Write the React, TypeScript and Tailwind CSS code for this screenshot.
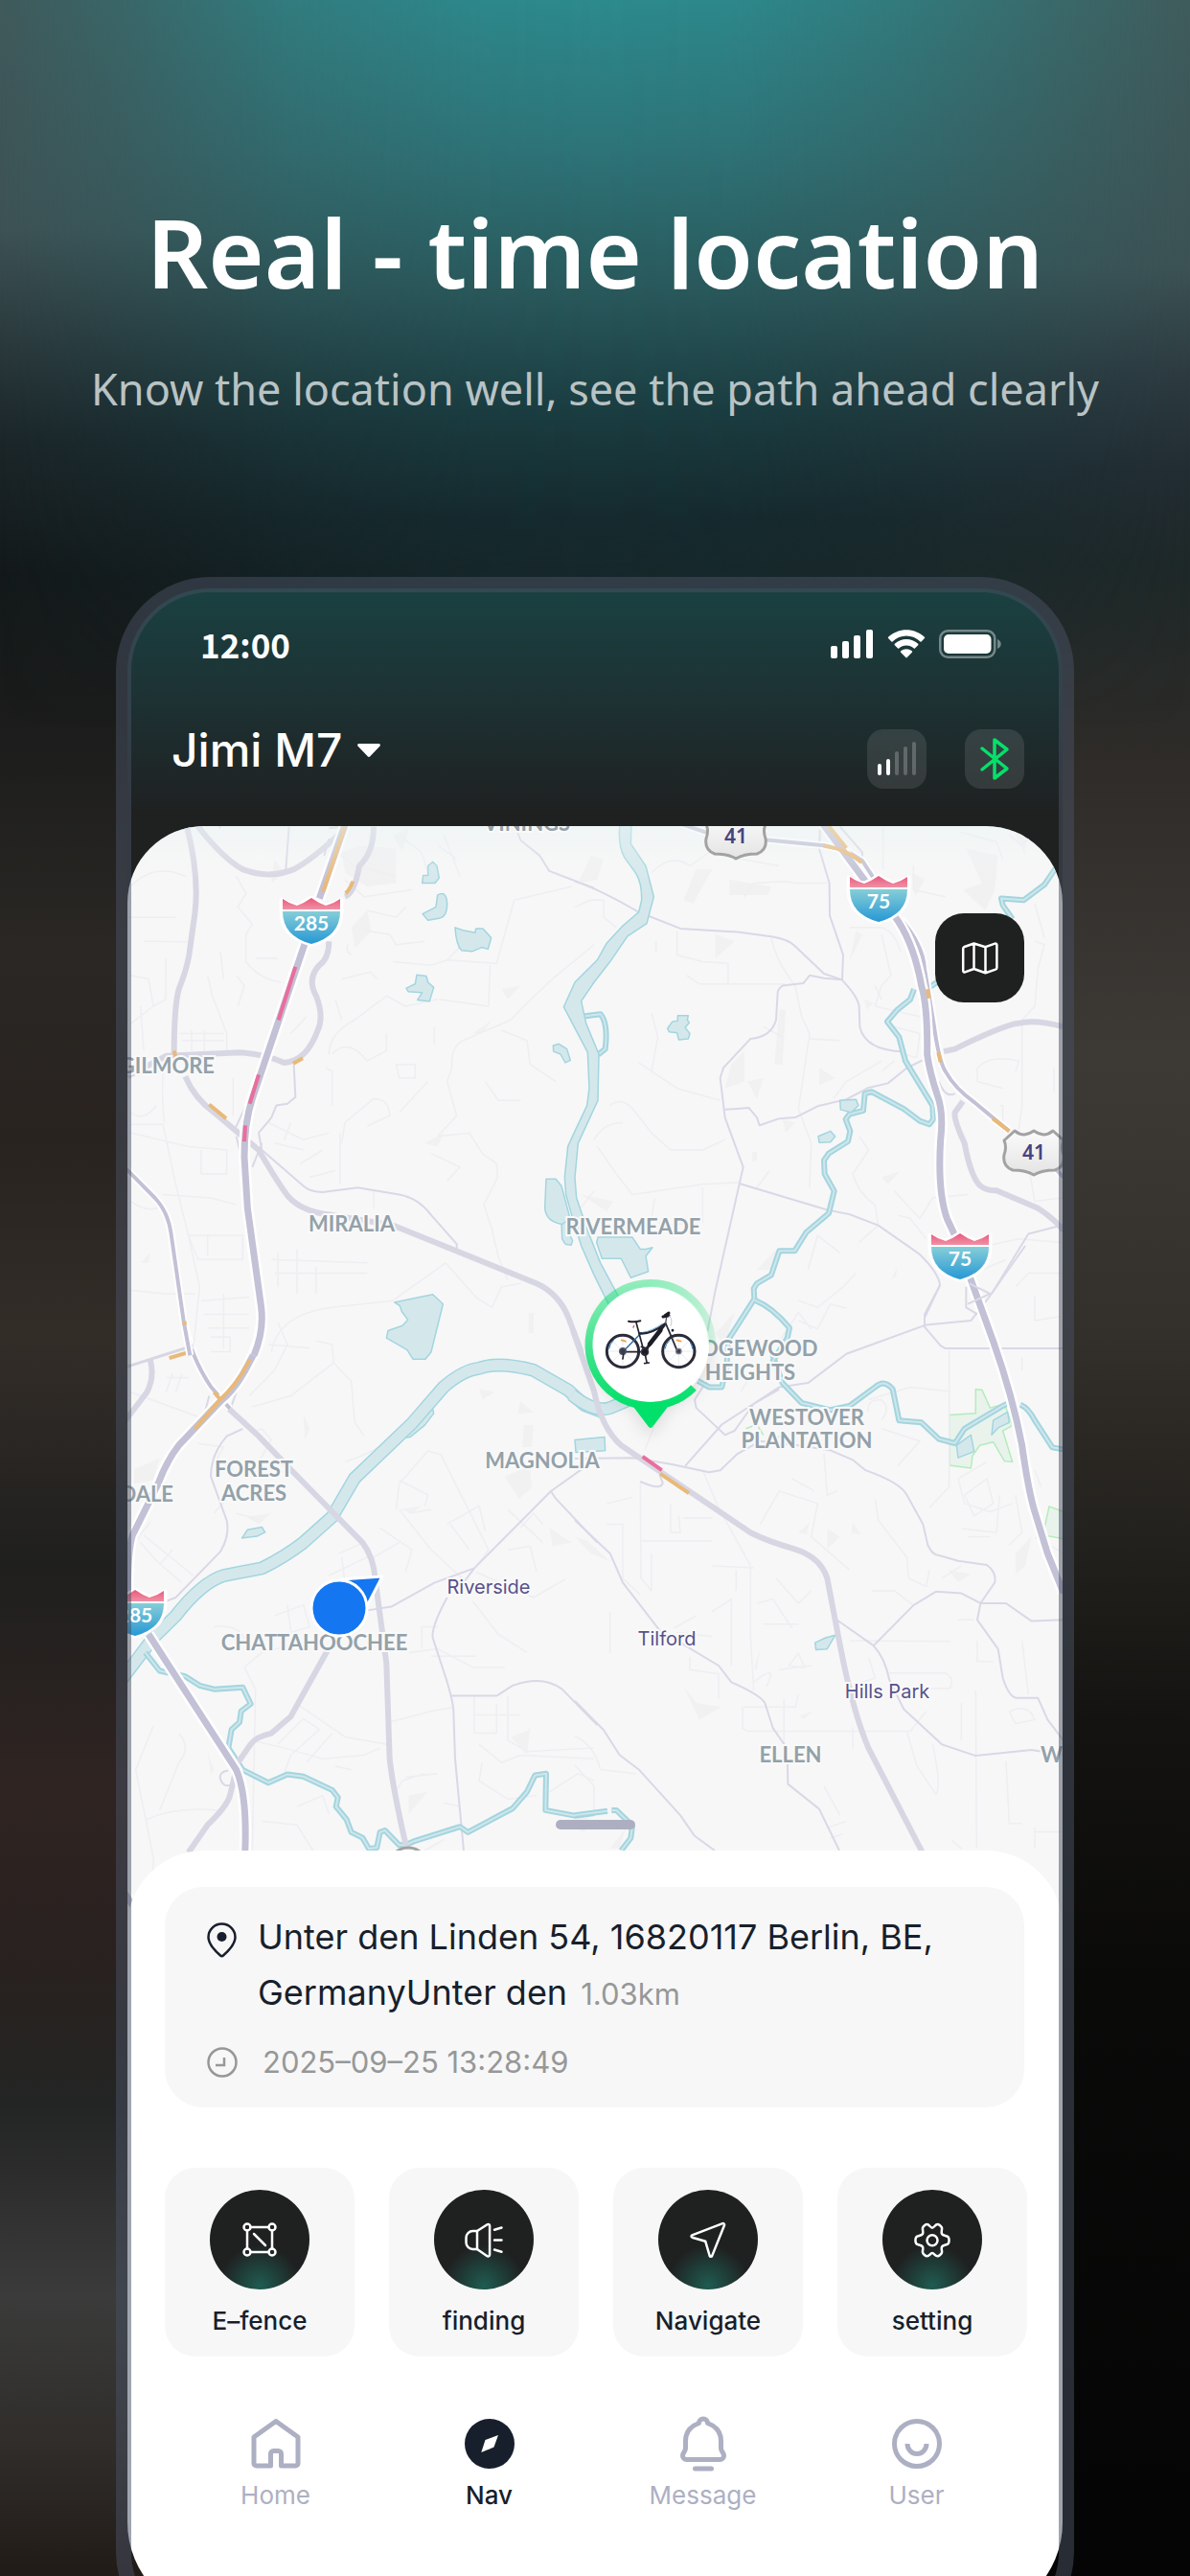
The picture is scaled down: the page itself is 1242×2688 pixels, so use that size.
import type { ReactNode } from "react";

type Tone = "minor" | "street" | "arterial" | "rail" | "highway" | "trunk" | "slow" | "jam";

const toneClass: Record<Tone, string> = {
  minor: "stroke-[#eeeef3] stroke-[1.5px]",
  street: "stroke-[#dad8e7] stroke-[2px]",
  arterial: "stroke-[#d7d6e3] stroke-[6px]",
  rail: "stroke-[#d7d6e3] stroke-[3px]",
  highway: "stroke-[#c2c1d6] stroke-[7px]",
  trunk: "stroke-[#c2c1d6] stroke-[4px]",
  slow: "stroke-[#e9b977] stroke-[4px]",
  jam: "stroke-[#ea6e9c] stroke-[4px]",
};

function Line({ d, tone }: { d: string; tone: Tone }) {
  const casing =
    tone === "highway"
      ? "stroke-white stroke-[12px]"
      : tone === "trunk"
        ? "stroke-white stroke-[8px]"
        : "";
  return (
    <g fill="none" strokeLinejoin="round">
      {casing && <path d={d} className={casing} vectorEffect="non-scaling-stroke" />}
      <path d={d} className={toneClass[tone]} vectorEffect="non-scaling-stroke" />
    </g>
  );
}

function Creek({ d, wide = false }: { d: string; wide?: boolean }) {
  return (
    <g fill="none" strokeLinejoin="round">
      <path
        d={d}
        className={wide ? "stroke-[#a3d5df] stroke-[14px]" : "stroke-[#a3d5df] stroke-[6px]"}
        vectorEffect="non-scaling-stroke"
      />
      <path
        d={d}
        className={wide ? "stroke-[#d4e8ec] stroke-[11px]" : "stroke-[#cfe6eb] stroke-[2px]"}
        vectorEffect="non-scaling-stroke"
      />
    </g>
  );
}

function Lake({ d }: { d: string }) {
  return (
    <path
      d={d}
      className="fill-[#d4e8ec] stroke-[#a3d5df] stroke-[1.5px]"
      strokeLinejoin="round"
      vectorEffect="non-scaling-stroke"
    />
  );
}

function NorthWest() {
  return (
    <g transform="translate(130 850) scale(0.33333 0.35714)">
      <g className="fill-[#f1f1f2]">
        <path d="M680 110l60-20 110 10v100l-90 10-70-40z" />
        <path d="M710 330l50-50 12 60-50 50zM840 60l50-20-20 70zM1180 510l60-10-40 40zM940 960l60-30-20 40zM1090 640l60-40-30 40z" />
        <path d="M50 1310l30-30-5 30zM1265 1455h16v60h-16zM470 130l30 40-40 30z" />
      </g>
      <Line
        tone="minor"
        d="M20 210Q90 140 190 180M10 300H160M60 370L200 372M130 420L128 540 90 560 20 610M20 470L75 480 90 560M260 470L275 530 320 640V690M300 400L310 480M355 560L375 500 350 470M350 180L380 230 355 270 400 320 380 350V430Q420 480 490 490M410 420H480M640 90L720 150 850 180M690 190L750 240 900 220M760 280L850 300 880 270M860 60L930 110 960 200M1000 60L1050 180M980 90L1040 130"
      />
      <Line
        tone="minor"
        d="M840 430L960 440 1010 425 1165 435 1220 250 1400 210M1010 425L1110 330M985 540L1140 560 1145 440M1470 380L1340 480 1250 560 1210 600 1060 660Q1020 680 1025 740L1010 780 1040 880 980 940M640 700Q640 640 720 600L820 530 880 560 980 540M650 700Q700 650 760 720L820 690V640M970 670V620M850 730H910V770H860zM1180 630L1260 660 1270 730 1350 780M1130 780L1170 835H1240M650 850V750L630 740M680 960L690 900 780 830Q830 830 830 880L760 910M860 870L950 780M675 930V1080M980 940L1080 930 1120 990 1165 1020 1168 1060 1125 1140 1150 1210 1170 1290 1200 1360M960 990L1050 1030 1010 1070"
      />
      <Line
        tone="minor"
        d="M450 900L560 950 640 930M470 960L560 980M500 950L520 900M550 1020L620 980M580 1060L660 1040M20 905H120L160 1080 200 1230 235 1380 215 1560M20 930L200 970 320 980V1050H240V980M20 1130Q80 1170 120 1140M120 1110L270 1120 350 1140M200 1230H370V1300H230zM260 1230V1290M20 1390L130 1400 220 1400M240 1420L390 1410M250 1460H390M260 1500H390M310 1400V1560M480 1280V1380M460 1300L760 1310M470 1340H760M540 1270V1400M600 1320V1400M460 1570Q480 1460 650 1440L840 1420 1005 1310 1100 1410 1150 1440 1180 1380 1240 1370M780 1100V1150"
      />
      <Line tone="minor" d="M130 705Q110 780 125 900M60 690L50 560M170 640H310M180 660H310M210 630V690M250 630V690M340 770V880M20 870Q60 900 100 850M570 590L520 640M660 540L680 600M680 480L770 460 790 480M700 380Q690 400 710 410M760 340L830 350 850 380 940 370" />
      <Line tone="street" d="M515 35L505 160M295 35l6 4M640 40L690 35M625 120L640 70M1230 50L1240 75 1300 120 1330 165 1470 215" />
      <Line tone="street" d="M530 730L535 825 510 845 475 850 460 885 420 930 430 980 560 1085Q580 1103 620 1103L730 1090 860 1110Q920 1120 960 1170L1040 1255V1270M345 920L380 850M350 940L365 1000M400 1030L430 960" />
      <Lake d="M950 150L965 138 978 150 985 185 972 200H932L935 178H950z" />
      <Lake d="M980 235Q1008 220 1010 260 1010 300 985 303L950 309 933 290 975 270z" />
      <Lake d="M1035 330L1060 338 1098 345 1100 333H1122L1148 360 1138 393 1118 388 1088 400 1055 397Q1038 380 1035 330z" />
      <Lake d="M915 468L945 472 950 490 968 505 955 545 917 542 932 520 888 517 882 507 910 495z" />
      <Lake d="M1342 675L1360 670 1385 685 1396 718 1380 725 1365 700 1343 692z" />
      <Lake d="M845 1425L935 1408 965 1402 997 1430 960 1570 942 1591H903L885 1564 820 1529 825 1508 870 1493 887 1476 868 1452 862 1435z" />
      <Lake d="M1368 1190L1370 1240 1380 1255 1398 1258 1403 1245 1390 1220V1180z" />
      <Lake d="M1320 1065H1350L1368 1085 1395 1180 1370 1197Q1320 1190 1316 1150z" />
      <Line tone="arterial" d="M195 35Q235 180 220 290L205 390Q200 440 170 510 155 560 155 700" />
      <Line tone="arterial" d="M230 35Q310 130 370 160 450 190 530 160 590 130 680 50" />
      <Line tone="arterial" d="M780 35Q780 110 735 150 720 230 690 240M640 370Q640 420 610 440 570 480 600 530 625 590 605 630 570 720 500 725 440 700 360 695L130 705 10 765" />
      <Line tone="arterial" d="M190 765Q220 830 280 870L420 980Q470 1060 500 1100 540 1160 650 1170L840 1200 1290 1370Q1360 1400 1390 1470L1430 1570" />
      <Line tone="highway" d="M690 30L610 245M565 375L400 830Q375 900 375 1000L385 1150 428 1440Q437 1510 405 1580" />
      <Line tone="trunk" d="M5 1035L95 1120Q135 1160 145 1220L185 1480 205 1580" />
      <Line tone="slow" d="M690 35L622 225M715 195Q705 220 692 230M528 727L558 712M265 847L318 888M155 690L160 708M188 1480V1492" />
      <Line tone="jam" d="M535 445L482 600M420 760L392 845M378 908L375 955" />
    </g>
  );
}

function NorthEast() {
  return (
    <g transform="translate(600 850) scale(0.33333 0.35714)">
      <g className="fill-[#f1f1f2]">
        <path d="M50 120l40 10-20 60-60 10zM380 160h50l-60 100-30-10zM485 190l130 20-10 25H485zM1225 100l100 20-10 100-30 60-70-60 60-20zM440 350l60 20-60 50zM880 340l20 10-40 80z" />
        <path d="M640 570h20l-10 160h-25zM490 730l40-40v90l-60 20zM540 780l50-10-20 60zM765 740l50 30-50 20zM905 540l30 10-20 20zM20 1110l100 20-20 30zM555 985h14v28h-14zM1055 170l40 20-30 50z" />
        <path d="M570 1330l60-60-10 60zM960 1060l60-20-40 40zM1380 60l30-20v80zM250 370h8v34h-8zM650 890l40 10-30 30z" />
      </g>
      <Line
        tone="minor"
        d="M0 270L50 250H90V300L130 330M240 170Q300 110 360 150L420 110 520 130 640 150M530 240L560 200 660 195 690 200H790M320 340V410L400 430 480 435V495M350 470L390 495H660M615 360Q630 430 690 500L710 590 735 640 700 860 740 960 735 1090M735 655L830 660M590 620L650 650M240 580L260 650 240 750M200 725L320 800 455 835M110 850Q150 820 190 870L240 930 300 980 400 980 470 950M60 950Q90 900 150 900M70 970L130 1050 180 1110 400 1080 515 1075M250 1120L240 1180 280 1200 400 1190V1090M610 1040L570 1090M0 1170L60 1100"
      />
      <Line
        tone="minor"
        d="M860 330H960Q1000 340 1020 400M960 350L990 470 960 500 940 560 1080 590M960 540L940 500M890 940L920 980 870 1050Q890 1110 940 1140L950 1200 890 1250M1000 1100L1080 1180 1120 1120 1230 1110M1010 1170L1050 1180 1100 1240M1000 620L1080 640 1070 710 1030 700M960 750L1000 720M810 830L850 780 960 720M1060 150V220L1160 240M965 35V160M1205 50L1320 80 1340 130M1440 370L1470 380 1450 450 1440 560 1400 600V850M1260 740Q1300 700 1390 720L1380 750M1260 740V780L1340 800M1330 850H1340V930M1400 850L1390 920M1410 970L1440 1130 1525 1120M1240 1270L1390 1240 1525 1250M1250 1340L1350 1300M700 1420L760 1440 840 1380 880 1340M1525 1340L1420 1340 1380 1380M730 1330L760 1230 830 1280M1440 260L1470 360M1500 740V810M1360 60L1400 90 1430 60 1525 90"
      />
      <Line tone="street" d="M0 195Q70 215 200 285L330 333 510 343 620 357Q670 365 690 385L780 465 835 482Q885 530 890 560L892 620Q910 690 1030 692" />
      <Line tone="street" d="M768 35L765 100 797 200 798 295 840 410 837 482 780 478 735 470 715 493 650 500Q635 510 635 520L630 600Q615 650 550 655L465 740 455 770 470 885 527 1030 440 1390 415 1510" />
      <Line tone="street" d="M470 862L545 857 570 885 578 908 640 888 690 885 760 852 850 832 920 798 980 785 1040 740 1090 717M515 1078L790 1155 860 1168 950 1200 1080 1285Q1140 1340 1143 1375L1095 1470M1305 1400L1420 1225 1525 1200" />
      <Line tone="street" d="M830 35L900 110V130M1140 780Q1160 830 1190 815M1225 1380V1440L1260 1460M1235 1370L1300 1400 1230 1430" />
      <Creek d="M20 590L80 583Q105 610 95 685L72 702" />
      <Lake d="M140 35Q135 90 155 125L190 170Q210 200 209 250L200 285 150 325 100 375 70 425 0 490-35 562 40 695 45 800 38 850 0 925-22 970-32 1060-28 1110-10 1170 20 1260 60 1345 105 1430H150L135 1405 80 1310 40 1215 5 1120 0 1060 10 960 40 900 72 835 75 700 35 610 20 545 60 490 110 430 165 355 225 318 247 240 222 150 175 85 177 20H140z" />
      <Creek d="M1510 150L1470 205 1405 250 1335 245 1340 265 1370 305M1150 480L1110 505M1062 510L1050 540 1010 570 978 605 1015 650 1035 720 1120 850 1122 890 1110 905 1080 895 1030 860 930 810 908 815 903 865 860 875 848 890 862 925 855 955 795 990 780 1010 782 1050 812 1100 795 1165 725 1220 688 1275H640L615 1345 570 1370 560 1385 562 1415 480 1535" />
      <Creek d="M562 1418Q620 1440 672 1500L665 1530 618 1600" />
      <Lake d="M830 835L880 832 888 850 865 870 832 862z" />
      <Lake d="M762 940L800 925 815 940 800 957 765 958z" />
      <Lake d="M322 587H355L352 600 358 608 345 622 360 640 355 655 325 658 320 638 295 635 290 625 305 605 322 603z" />
      <Lake d="M72 1235H180L205 1270H222L243 1265 222 1290 230 1335 175 1353 145 1297H85L68 1250z" />
      <Line tone="arterial" d="M1155 692L1190 685Q1350 610 1400 608 1450 600 1530 620" />
      <Line tone="arterial" d="M1215 838L1190 870Q1185 890 1220 960 1240 1060 1270 1085 1290 1100 1320 1098L1450 1150Q1500 1180 1530 1215" />
      <Line tone="trunk" d="M340 30L420 55M580 72L780 90 850 105 900 135 935 185" />
      <Line tone="trunk" d="M1020 305Q1090 380 1095 450L1125 620Q1140 720 1160 750 1190 800 1250 840L1360 925M1500 1030L1530 1060" />
      <Line tone="highway" d="M775 25L910 195M1000 295Q1060 370 1085 500 1105 560 1103 700 1110 750 1135 820 1155 870 1145 950 1135 1100 1165 1180L1200 1250" />
      <Line tone="slow" d="M792 30L850 98M778 91Q850 100 898 140M1104 510L1109 537M1138 695L1145 723M1308 888L1360 925" />
    </g>
  );
}

function SouthWest() {
  return (
    <g transform="translate(130 1380) scale(0.33333 0.38265)">
      <g className="fill-[#f1f1f2]">
        <path d="M30 400l80-30-20 60-60 10zM560 250l20 40-15 30zM1240 215l40 30-50 5zM1250 280h30l-5 60h-30zM1190 420l80-30 5 60-40 30zM1330 560l70 40-60 10zM860 510l70-10-30 20zM380 530l80-10-40 30z" />
        <path d="M890 1290l60-10-60 60zM1240 1160l30-60-10 80zM1390 1370l70-40-20 60zM260 1170l20 50-10 10zM1110 180l50 10-40 20zM1210 1130l60-20-20 60z" />
      </g>
      <Line
        tone="minor"
        d="M270 40H330V80H270M450 60L580 70M480 0L510 60 470 130 390 200M600 50L650 60 655 110 520 200 400 230M655 110L710 160 720 270 750 310M130 150H200M20 190L240 260M150 140L130 190M180 140L160 190M230 330L310 340 290 370 340 400M400 300L430 290 460 320 420 380M40 590L80 545M50 600L100 650 180 710M60 580L215 690M110 660L150 620M280 520L310 490M350 520L430 540M690 380Q800 350 870 290"
      />
      <Line
        tone="minor"
        d="M850 510L860 440 950 350 990 360 1140 620 1070 700M860 430L950 470 940 500M860 510L960 620 1060 700M890 520L960 510M1010 550L1110 500 1130 570M1020 550L1080 620M800 560L900 620 880 680M780 640L860 600M670 630L750 600M680 640L690 710M640 690L760 640M470 800L560 770 580 830 500 850M280 830Q360 820 380 870M510 770L520 840M1200 510L1310 600M1240 560L1280 520 1310 550M1200 620L1270 610 1290 680M930 830H980M890 900L980 890 1090 940H1190M1100 680L1280 750 1380 700M1090 760L1170 850 1260 900M960 910H1100M930 830V890"
      />
      <Line
        tone="minor"
        d="M375 940L410 1000 400 1440M375 940L430 900 520 880M540 1040L690 1130 820 1150M480 1150L560 1080 610 1110 520 1180 500 1230M570 1200L650 1120M400 1140L500 1160 620 1190 750 1180 800 1160M660 1210L710 1220M830 1090L960 1060 1030 1050M1095 1020V1120H1165V1040M1095 1070H1240M1200 1020V1140L1260 1170 1470 1160M1110 1150L1180 1200 1240 1180 1470 1190M1120 1200L1110 1250 1200 1300 1290 1290M1330 1280L1420 1230 1470 1250M90 1100L35 1220 70 1370 90 1460V1500M70 1355Q160 1320 290 1330M170 1120Q210 1160 170 1200L110 1330M430 1360L540 1370 590 1440M540 1320L620 1290 640 1340M840 1290L870 1250 940 1230M880 1240L980 1230M1000 1310L1050 1320M940 1440L1000 1410"
      />
      <Line tone="street" d="M370 290L320 310Q270 360 270 420L320 540Q330 580 300 625L160 750 130 760M760 785L835 775 970 710 1095 670 1335 460 1440 395M1065 705L1095 670M1010 750Q960 830 965 860L1010 980Q1030 1040 1030 1060L1035 1190 1062 1440M1020 1018H1165L1215 990Q1310 960 1370 1000L1480 1098M1335 460L1350 480 1480 600" />
      <Line tone="street" d="M325 1222Q295 1225 300 1245 310 1270 335 1260M350 190L330 240M265 200L250 250" />
      <Lake d="M368 588L385 565 430 558 440 572 415 583z" />
      <Lake d="M870 315L965 235 968 248 940 280 895 312z" />
      <Creek wide d="M-10 975L90 860 160 800Q240 710 310 690L430 670Q500 640 560 600L650 530 720 425 900 275 1000 175Q1060 130 1110 125 1170 105 1280 130L1390 185 1440 225 1500 245" />
      <Creek d="M65 900L110 950 190 965 235 990 280 1000 370 995 395 1040 365 1060 360 1090 335 1110 325 1160 370 1220 450 1255 510 1232 560 1238 650 1275 668 1295 662 1320 695 1355 710 1390 745 1405 765 1435 790 1432 800 1390 815 1385 860 1425H880L905 1415 1050 1375 1075 1390 1215 1325 1260 1280 1285 1235 1320 1230 1318 1330 1410 1345 1470 1338" />
      <Line tone="rail" d="M10 120L190 70" />
      <Line tone="arterial" d="M80 100Q95 150 70 190L0 270M320 230L420 310 525 405 745 600Q780 640 785 700L820 930 830 1190Q840 1270 882 1430M635 895L520 1075 460 1120Q410 1130 395 1150L355 1200 330 1290Q320 1320 260 1370L200 1445" />
      <Line tone="trunk" d="M187-5Q205 90 270 175L330 235" />
      <Line tone="highway" d="M430-10Q425 60 390 110 350 180 300 215L170 335Q130 380 105 440L25 580Q10 620 10 740M75 850L350 1220Q385 1290 377 1450M0 1555L25 1590" />
      <Line tone="slow" d="M392 100Q360 160 300 210L220 290M280 190L300 210M140 97L193 83" />
    </g>
  );
}

function SouthEast() {
  return (
    <g transform="translate(600 1300) scale(0.33333 0.43367)">
      <g className="fill-[#f1f1f2]">
        <path d="M0 700l40 10 70 50-60-20zM340 1060l40 40 80 10-70 30zM790 680l40 20-40 30zM870 665l25 30-30-5zM735 665l-10 30-25-5zM1380 740l50-40-20 70-30 20zM1170 780l70 10-40 20zM990 80l20-30-5 25zM440 210l60-50-30 80zM110 1450l50-50-20 50zM705 1130l40-10-30 20zM580 970l-10 50-10-5z" />
      </g>
      <path
        d="M1172 407L1255 403V345L1275 347 1300 390 1345 380 1370 432 1340 445 1370 520 1345 518 1310 472 1268 480 1245 505 1240 535 1173 528zM1530 640L1485 627 1470 680 1480 698 1530 705z"
        className="fill-[#e9f3ec] stroke-[#b4ecbb] stroke-[1.5px]"
        vectorEffect="non-scaling-stroke"
      />
      <path d="M535 440L570 430 590 455M605 460H640" fill="none" className="stroke-[#b4ecbb] stroke-[1.5px]" vectorEffect="non-scaling-stroke" />
      <Line
        tone="minor"
        d="M220 490L250 430 290 390M205 570L207 800 240 830V740M205 710H430M100 620L180 605M100 670H150V800L205 840M300 620V690H330L325 650M340 655H430M400 540L450 630 550 770V940L560 1070M430 770L560 775M505 780V830M580 670L640 590 760 620 740 700 860 780M630 800L700 860 740 830M570 860L620 850 680 920M590 910H700M310 920L380 890M320 930L430 940M430 880L490 850V1010M360 990V1020L450 1030V1090M530 1110H690L700 1080M525 1110V1160L540 1168H1050L1100 1120M655 1090V1200M870 1160V1210M560 1050Q640 1000 600 1060M670 1010L700 980 720 1015zM640 1020L740 1010"
      />
      <Line
        tone="minor"
        d="M1172 250V580L1110 630M1170 350L1050 340 920 370M780 500L790 600 820 590M680 560L750 590M940 610L950 660 1040 750 1045 800 1100 820 1110 780M1290 520L1200 560 1220 620 1300 640 1370 620M1210 680L1320 690 1330 600M1380 600L1400 690 1360 720M1150 800L1210 770M1440 700L1530 740M930 830H1000L1060 865M860 950L1175 952M980 1028H1160Q1190 1040 1175 1065H1000M1255 1070L1258 1450M1360 1120Q1420 1100 1440 1140L1380 1150zM1210 1100V1190M1120 1200Q1150 1300 1130 1320L1070 1250 1040 1170M1200 900H1250M1260 950V1000H1310M1400 950L1420 1080M1440 1400V1450M1440 1410H1530M1350 1240L1360 1390H1400M780 1300L830 1370M790 1400L850 1385M800 1425L840 1415M1180 1430L1210 1450M0 1180Q60 1200 80 1260L190 1270M0 1250L60 1300V1360M110 880V980M900 1050L940 1040 920 990"
      />
      <Line tone="minor" d="M920 400Q910 370 960 370 990 390 960 420M960 440L1080 470 1010 530M1400 270V300M1440 540L1460 580M640 230L700 160 740 200M700 180L760 200 800 140 850 150M1220 600L1290 560 1310 620 1250 650zM1230 700H1300M560 300L520 350M1440 120V180L1520 170" />
      <Line tone="street" d="M205 567Q270 590 275 570L265 550M0 512L180 510 300 525 420 545 455 540 510 500 580 470 700 480 800 492 870 515 910 540Q1020 570 1040 600L1090 670 1105 720Q1120 745 1140 745L1200 758 1290 768Q1320 785 1315 810L1270 860" />
      <Line tone="street" d="M0 660L110 740 150 810 265 925 450 1010 490 1050Q580 1080 595 1100L620 1160 665 1210 667 1295 765 1355 828 1455M0 1095L90 1165 140 1225 200 1260 330 1370 375 1420 438 1455" />
      <Line tone="street" d="M820 900L935 962 1060 865 1130 832 1210 836 1270 860H1350L1430 903 1530 900M935 962Q970 990 985 1045L1030 1115 1150 1200 1255 1227 1430 1213 1530 1225M1270 860L1260 900 1325 970 1340 1040Q1360 1088 1385 1088H1450L1480 1140 1530 1190" />
      <Line tone="street" d="M345 530L460 430 640 340 730 330 850 260 1100 190 1240 180 1300 120 1410 0M425 310L375 370 380 390 470 455 500 445 560 380 640 345M1095 165V195L1145 240 1160 247H1530M1143 95L1095 165" />
      <Creek d="M385 325L420 340H460L475 290 480 235M618 260L650 330 710 378 800 395 860 385 940 340Q970 320 995 345L1015 420 1085 425 1140 465 1190 475 1220 440 1340 385 1360 378M1395 382Q1420 390 1440 420L1495 485 1530 490" />
      <Creek d="M0 1370L102 1360M115 1358L130 1358 180 1395 175 1425 145 1455" />
      <Creek wide d="M-10 358Q60 402 110 390L165 372" />
      <Lake d="M0 467L93 460 95 493 3 497z" />
      <Lake d="M752 955L785 943 815 937 790 970 755 972z" />
      <Lake d="M1195 480L1240 455 1250 495 1200 510z" />
      <Lake d="M1305 455L1310 420 1355 400 1360 425 1325 438z" />
      <Line tone="arterial" d="M-5 205L60 350Q85 440 145 480L270 545 550 690Q600 710 690 730 770 750 790 800L830 960Q870 1120 920 1210L1090 1462" />
      <Line tone="highway" d="M1225 50L1310 230Q1370 360 1400 480 1420 590 1440 640L1480 740 1530 835" />
      <Line tone="jam" d="M212 507L272 540" />
      <Line tone="slow" d="M267 548L357 595" />
    </g>
  );
}

function Interstate({ x, y, route }: { x: number; y: number; route: string }) {
  return (
    <g transform={`translate(${x} ${y})`}>
      <path
        d="M-31 2Q-24 7-15 8-7 5 0 0 7 5 15 8 24 7 31 2V14Q31 40 0 48-31 40-31 14z"
        fill="white"
        stroke="white"
        strokeWidth="5"
        strokeLinejoin="round"
      />
      <path d="M-30 1Q-23 6-15 8-7 5 0 0 7 5 15 8 23 6 30 1V12H-30z" fill="url(#crest)" />
      <path d="M-30 14H30Q30 40 0 48-30 40-30 14z" fill="url(#shield)" />
      <text y="34" textAnchor="middle" className="fill-white font-['Lato'] text-[21px] font-bold">
        {route}
      </text>
    </g>
  );
}

function UsRoute({ x, y, route }: { x: number; y: number; route: string }) {
  return (
    <g transform={`translate(${x} ${y})`}>
      <path
        d="M-20 1Q-15 5-10 5-4 4 0 1 4 4 10 5 15 5 20 1L31 11Q28 18 31 26 33 38 22 42 8 42 0 47-8 42-22 42-33 38-31 26-28 18-31 11z"
        fill="url(#plate)"
        stroke="#a2a2a2"
        strokeWidth="3"
        strokeLinejoin="round"
      />
      <text y="31" textAnchor="middle" className="fill-[#474480] font-['Noto_Sans'] text-[21px] font-semibold">
        {route}
      </text>
    </g>
  );
}

const districts: { name: string; x: number; y: number; anchor?: "end" | "start" }[] = [
  { name: "VININGS", x: 550, y: 867 },
  { name: "GILMORE", x: 224, y: 1120, anchor: "end" },
  { name: "MIRALIA", x: 367, y: 1285 },
  { name: "RIVERMEADE", x: 661, y: 1288 },
  { name: "RIDGEWOOD", x: 783, y: 1415 },
  { name: "HEIGHTS", x: 783, y: 1440 },
  { name: "WESTOVER", x: 842, y: 1487 },
  { name: "PLANTATION", x: 842, y: 1511 },
  { name: "MAGNOLIA", x: 566, y: 1532 },
  { name: "FOREST", x: 265, y: 1541 },
  { name: "ACRES", x: 265, y: 1566 },
  { name: "DALE", x: 181, y: 1567, anchor: "end" },
  { name: "CHATTAHOOCHEE", x: 328, y: 1722 },
  { name: "ELLEN", x: 825, y: 1839 },
  { name: "W", x: 1086, y: 1839, anchor: "start" },
];

const places = [
  { name: "Riverside", x: 510, y: 1663 },
  { name: "Tilford", x: 696, y: 1717 },
  { name: "Hills Park", x: 926, y: 1772 },
];

function Bicycle() {
  return (
    <g transform="translate(590 1320) scale(0.33333)" fill="none" strokeLinecap="round" strokeLinejoin="round">
      <g stroke="#d4d6dc" strokeWidth="1.5">
        <path d="M180 225v92M134 270h92M148 238l64 64M212 238l-64 64M355 225v92M309 270h92M323 238l64 64M387 238l-64 64" />
      </g>
      <g stroke="#2a2c3a" strokeWidth="9">
        <circle cx="180" cy="270" r="50" />
        <circle cx="355" cy="270" r="50" />
      </g>
      <path d="M137 262a44 44 0 0 1 14-26M312 262a44 44 0 0 1 14-26M398 262a44 44 0 0 0-6-18" stroke="#2f7fc4" strokeWidth="3" />
      <path d="M176 235l13 4M349 235l13 4" stroke="#f0a04a" strokeWidth="5" />
      <path d="M182 270l56-58" stroke="#2c69a6" strokeWidth="4" />
      <path d="M182 272h62M222 180l24 90" stroke="#23242f" strokeWidth="5" />
      <path d="M232 214q35 4 80-30" stroke="#23242f" strokeWidth="7" />
      <path d="M242 211q30-4 62-27" stroke="#2f7fc4" strokeWidth="2" />
      <path d="M310 188l-60 80" stroke="#23242f" strokeWidth="9" />
      <path d="M298 204l-34 44" stroke="#1b1c26" strokeWidth="14" />
      <path d="M198 176q18 4 37-1" stroke="#23242f" strokeWidth="6" />
      <path d="M215 190l-2 6" stroke="#d06a6a" strokeWidth="4" />
      <path d="M314 182l36 86M322 200l26 62" stroke="#2a2c3a" strokeWidth="5" />
      <path d="M314 182l4-24" stroke="#55586a" strokeWidth="4" />
      <path d="M306 162l18-4M312 158l12-8" stroke="#1b1c26" strokeWidth="9" />
      <path d="M326 160q12 12 4 30" stroke="#c4c6ce" strokeWidth="3" />
      <path d="M336 204v1" stroke="#1b1c26" strokeWidth="8" />
      <circle cx="180" cy="270" r="10" fill="#3b3d4a" stroke="#55586a" strokeWidth="4" />
      <circle cx="355" cy="270" r="8" fill="#3b3d4a" stroke="#777a88" strokeWidth="4" />
      <circle cx="249" cy="272" r="11" fill="#1b1c26" stroke="#3b3d4a" strokeWidth="4" />
      <path d="M182 280l-2 14M249 276l6 28M248 308l14-2M238 256l20 6" stroke="#23242f" strokeWidth="5" />
    </g>
  );
}

function CityMap() {
  return (
    <svg
      viewBox="133 862 976 1149"
      className="block w-full rounded-t-[80px] bg-[#f7f7f7]"
      role="img"
      aria-label="Map with the bike and your position"
    >
      <defs>
        <linearGradient id="crest" x1="0" y1="0" x2="0" y2="1">
          <stop offset="0" stopColor="#e9597c" />
          <stop offset="1" stopColor="#f091a5" />
        </linearGradient>
        <linearGradient id="shield" x1="0" y1="0" x2="0" y2="1">
          <stop offset="0" stopColor="#86ced8" />
          <stop offset="1" stopColor="#2698d4" />
        </linearGradient>
        <linearGradient id="plate" x1="0" y1="0" x2="0" y2="1">
          <stop offset="0" stopColor="#fbfbfb" />
          <stop offset="1" stopColor="#e4e4e4" />
        </linearGradient>
        <linearGradient id="ringMain" gradientUnits="userSpaceOnUse" x1="679" y1="1467" x2="679" y2="1339">
          <stop offset="0" stopColor="#05e06b" />
          <stop offset="0.2" stopColor="#05e06b" stopOpacity="0.9" />
          <stop offset="1" stopColor="#05e06b" stopOpacity="0.42" />
        </linearGradient>
        <linearGradient id="ringTail" gradientUnits="userSpaceOnUse" x1="679" y1="1339" x2="743" y2="1420">
          <stop offset="0" stopColor="#05e06b" stopOpacity="0.42" />
          <stop offset="1" stopColor="#05e06b" stopOpacity="0.08" />
        </linearGradient>
        <linearGradient id="mist" x1="0" y1="0" x2="0" y2="1">
          <stop offset="0" stopColor="#e8f3f3" stopOpacity="0.5" />
          <stop offset="1" stopColor="#f7f7f7" stopOpacity="0" />
        </linearGradient>
        <filter id="pinShadow" x="-40%" y="-40%" width="180%" height="180%">
          <feDropShadow dx="0" dy="8" stdDeviation="8" floodColor="#000000" floodOpacity="0.1" />
        </filter>
      </defs>

      <SouthWest />
      <NorthWest />
      <SouthEast />
      <NorthEast />
      <rect x="133" y="862" width="976" height="60" fill="url(#mist)" />

      {districts.map((label) => (
        <text
          key={label.name}
          x={label.x}
          y={label.y}
          textAnchor={label.anchor ?? "middle"}
          paintOrder="stroke"
          className="fill-[#93a1a9] stroke-[#f9f9f9] stroke-[4px] font-['Lato'] text-[22px] font-bold"
        >
          {label.name}
        </text>
      ))}
      {places.map((label) => (
        <text
          key={label.name}
          x={label.x}
          y={label.y}
          textAnchor="middle"
          paintOrder="stroke"
          className="fill-[#57528c] stroke-[#f9f9f9] stroke-[4px] font-['Inter'] text-[20px]"
        >
          {label.name}
        </text>
      ))}

      <Interstate x={325} y={937} route="285" />
      <Interstate x={917} y={914} route="75" />
      <Interstate x={1002} y={1287} route="75" />
      <Interstate x={141} y={1659} route="285" />
      <UsRoute x={768} y={849} route="41" />
      <UsRoute x={1079} y={1179} route="41" />
      <circle cx="426" cy="1948" r="20" fill="#f7f7f7" stroke="#a2a2a2" strokeWidth="3" />

      <g stroke="white" strokeWidth="3" fill="#1476f0" strokeLinejoin="round">
        <path d="M356 1648L399 1645 383 1676z" />
        <circle cx="354" cy="1678" r="29" />
      </g>

      <g fill="none" strokeWidth="8">
        <g filter="url(#pinShadow)">
          <path d="M658 1464H700L681 1489Q679 1491 677 1489z" fill="#05e06b" stroke="none" />
          <circle cx="679" cy="1403" r="61" fill="white" stroke="none" />
        </g>
        <path d="M724 1448A64 64 0 1 1 679 1339" stroke="url(#ringMain)" />
        <path d="M679 1339A64 64 0 0 1 743 1403" stroke="url(#ringTail)" />
      </g>
      <Bicycle />
    </svg>
  );
}

function StatusIcons() {
  return (
    <div className="flex h-[30px] items-center gap-[14px] text-white" aria-label="Signal, Wi-Fi and battery">
      <svg viewBox="0 0 46 30" className="h-[30px] w-[46px]" fill="currentColor">
        <rect x="1" y="17" width="7" height="13" rx="2" />
        <rect x="13" y="12" width="7" height="18" rx="2" />
        <rect x="25" y="6" width="7" height="24" rx="2" />
        <rect x="38" y="0" width="7" height="30" rx="2" />
      </svg>
      <svg viewBox="0 0 40 30" className="h-[30px] w-10" fill="currentColor">
        <path d="M20 6.500C25.500 6.500 30.600 8.700 34.500 12.400C34.800 12.700 35.300 12.700 35.600 12.400L38.900 9.100C39.300 8.700 39.300 8.100 38.900 7.700C28.400-2.400 11.600-2.400 1.100 7.700C0.700 8.100 0.700 8.700 1.100 9.100L4.400 12.400C4.700 12.700 5.200 12.700 5.500 12.400C9.400 8.700 14.500 6.500 20 6.500z" />
        <path d="M20 16.500C22.900 16.500 25.700 17.600 27.800 19.600C28.100 19.900 28.600 19.900 28.900 19.600L32.200 16.200C32.600 15.800 32.600 15.200 32.200 14.800C25.300 8.300 14.700 8.300 7.800 14.800C7.400 15.200 7.400 15.800 7.800 16.200L11.100 19.600C11.400 19.900 11.900 19.900 12.200 19.600C14.300 17.600 17.100 16.500 20 16.500z" />
        <path d="M25.800 22.300C22.500 19.500 17.500 19.500 14.200 22.300C13.700 22.700 13.700 23.300 14.100 23.700L19.300 29.100C19.700 29.500 20.300 29.500 20.700 29.100L25.900 23.700C26.300 23.300 26.300 22.700 25.800 22.300z" />
      </svg>
      <svg viewBox="0 0 65 30" className="h-[30px] w-[65px]">
        <rect x="1.250" y="1.250" width="57" height="27.500" rx="8" fill="none" stroke="white" strokeOpacity="0.4" strokeWidth="2.500" />
        <rect x="5" y="5" width="49.500" height="20" rx="5" fill="white" />
        <path d="M61 10C66 12 66 18 61 20z" fill="white" fillOpacity="0.4" />
      </svg>
    </div>
  );
}

const actions: { label: string; icon: ReactNode }[] = [
  {
    label: "E–fence",
    icon: (
      <>
        <circle cx="39" cy="39" r="3.500" />
        <circle cx="65" cy="39" r="3.500" />
        <circle cx="39" cy="65" r="3.500" />
        <circle cx="65" cy="65" r="3.500" />
        <path d="M42.500 39h19M42.500 65h19M39 42.500v19M65 42.500v19M46 46l12 12" />
      </>
    ),
  },
  {
    label: "finding",
    icon: (
      <>
        <path d="M45 43h-4.500a7 7 0 0 0-7 7v5a7 7 0 0 0 7 7H45z" />
        <path d="M45 43l10.500-6.800a1.700 1.700 0 0 1 2.600 1.500v30a1.700 1.700 0 0 1-2.600 1.500L45 62" />
        <path d="M63 41.700l7.500-2.200M63 52.500h7.500M63 62.500l7.500 2.200" />
      </>
    ),
  },
  {
    label: "Navigate",
    icon: (
      <path d="M67.200 35.200L35.300 47.300a1.300 1.300 0 0 0 .1 2.400L49.200 53.700 53.700 69a1.300 1.300 0 0 0 2.400.1L69 37a1.400 1.400 0 0 0-1.800-1.800z" />
    ),
  },
  {
    label: "setting",
    icon: (
      <>
        <path d="M52 39.700C54 39.700 55 36 57.500 36 59 36 61.500 38 62 39.500 62.500 41.500 61 44 62 46 63.500 48.500 67.500 47.500 68.800 49.500 69.800 51 69.800 54.500 68.800 56 67.500 58 63.500 57 62 59.500 61 61.500 62.500 63.500 62 65.500 61.500 67 59 69.300 57.500 69.300 55 69.300 54 66 52 66 50 66 49 69.300 46.500 69.300 45 69.300 42.500 67 42 65.500 41.500 63.500 43 61.500 42 59.500 40.500 57 36.500 58 35.200 56 34.200 54.500 34.200 51 35.200 49.500 36.500 47.500 40.500 48.500 42 46 43 44 41.500 41.500 42 39.500 42.500 38 45 36 46.500 36 49 36 50 39.700 52 39.700z" />
        <circle cx="52" cy="52.800" r="5.500" />
      </>
    ),
  },
];

const tabs: { label: string; active?: boolean; icon: ReactNode }[] = [
  {
    label: "Home",
    icon: (
      <svg viewBox="0 0 52 52" className="size-[52px]" fill="none" stroke="currentColor" strokeWidth="5" strokeLinejoin="round">
        <path d="M26 2.500L3 19v27.500a2.500 2.500 0 0 0 2.500 2.500h15V36.500a3 3 0 0 1 3-3h5a3 3 0 0 1 3 3V49h15a2.500 2.500 0 0 0 2.500-2.500V19z" />
      </svg>
    ),
  },
  {
    label: "Nav",
    active: true,
    icon: (
      <svg viewBox="0 0 52 52" className="size-[52px]">
        <circle cx="26" cy="26" r="26" fill="currentColor" />
        <path d="M35 17L30.500 29.500 17.300 35 21.500 22z" fill="white" />
      </svg>
    ),
  },
  {
    label: "Message",
    icon: (
      <svg viewBox="0 0 48 58" className="h-[58px] w-12" fill="none" stroke="currentColor" strokeWidth="5" strokeLinecap="round" strokeLinejoin="round">
        <path d="M24 3a4.500 4.500 0 0 0-4.500 4.500C10 11 5.500 18 5.500 26v8C5.500 37 2.500 38 2.500 41.500a4 4 0 0 0 4 4h35a4 4 0 0 0 4-4C45.500 38 42.500 37 42.500 34v-8c0-8-4.500-15-14-18.500A4.500 4.500 0 0 0 24 3z" />
        <path d="M15.500 55h17" />
      </svg>
    ),
  },
  {
    label: "User",
    icon: (
      <svg viewBox="0 0 52 52" className="size-[52px]" fill="none" stroke="currentColor" strokeWidth="5">
        <circle cx="26" cy="26" r="23.500" />
        <path d="M16 26a10 10.500 0 0 0 20 0" />
      </svg>
    ),
  },
];

function Backdrop() {
  return (
    <div className="absolute inset-0 -z-10 bg-[#12171a]" aria-hidden="true">
      <div className="absolute inset-0 bg-[linear-gradient(180deg,#3f5a5b_0px,#3d5254_240px,#2a393c_360px,#1b2629_460px,#13191a_600px,#191b1a_724px,#2a2724_990px,#28231f_1190px,#332d28_1393px,#1f1f1e_1634px,#2f2422_1861px,#28211f_2062px,#232524_2195px,#3a3b3a_2396px,#302d2a_2550px,#221c18_2680px)]" />
      <div className="absolute inset-0 bg-[linear-gradient(180deg,#3f5c5c_0px,#3c5254_280px,#2d3b40_390px,#222d33_490px,#1e2828_590px,#2e2b28_790px,#3d3a36_1100px,#332f2a_1393px,#24221e_1593px,#141311_1794px,#0a0a09_2062px,#050505_2600px)] mask-[linear-gradient(90deg,transparent_20%,black_80%)]" />
      <div className="absolute inset-x-0 top-0 h-[760px] bg-[linear-gradient(180deg,#2c8a8d_0px,#2d7377_160px,#29595c_300px,#1a3d41_430px,#152a2e_540px,rgba(21,32,34,0)_760px)] mask-[linear-gradient(90deg,transparent_0%,rgba(0,0,0,0.25)_10%,rgba(0,0,0,0.7)_24%,rgba(0,0,0,0.95)_40%,black_50%,rgba(0,0,0,0.95)_62%,rgba(0,0,0,0.65)_76%,rgba(0,0,0,0.2)_92%,transparent_100%)]" />
    </div>
  );
}

export default function App() {
  return (
    <main className="relative isolate min-h-screen overflow-hidden font-['Inter',sans-serif]">
      <Backdrop />

      <header className="px-10 pt-[212px] text-center font-['Noto_Sans',sans-serif]">
        <h1 className="text-[100px] leading-[100px] font-semibold whitespace-nowrap text-white">Real - time location</h1>
        <p className="mt-[68px] text-[45px] leading-[52px] whitespace-nowrap text-[#b9c3c4]">
          Know the location well, see the path ahead clearly
        </p>
      </header>

      <div className="relative mx-[121px] mt-[170px] -mb-[77px] rounded-[98px] px-3 pt-3 pb-[29px]">
        <div className="overflow-hidden rounded-t-[86px] rounded-b-[100px] bg-[linear-gradient(180deg,#1a4141_0px,#1d3234_110px,#1f2020_240px)]">
          <div className="flex items-center justify-between pt-[38px] pr-16 pl-[76px]">
            <time className="font-['Noto_Sans_CJK_SC',sans-serif] text-[35px] leading-10 font-bold text-white">12:00</time>
            <StatusIcons />
          </div>

          <div className="mt-[69px] flex items-start justify-between pr-10 pb-[39px] pl-[46px]">
            <button type="button" className="flex h-11 items-center gap-4 text-white">
              <span className="text-[48px] leading-[44px] font-medium">Jimi M7</span>
              <svg viewBox="0 0 24 14" className="h-3.5 w-6" fill="currentColor" aria-hidden="true">
                <path d="M1.500 0h21a1.500 1.500 0 0 1 1 2.500L13 13.500a1.500 1.500 0 0 1-2 0L.5 2.500A1.500 1.500 0 0 1 1.500 0z" />
              </svg>
            </button>
            <div className="flex gap-10">
              <button type="button" aria-label="Device signal" className="size-[62px] rounded-[17px] bg-white/10">
                <svg viewBox="0 0 62 62" className="size-full" stroke="white" strokeWidth="4" strokeLinecap="round">
                  <path d="M13 38v8M22 33v13" />
                  <path d="M31 25v21M40 20v26M49 15v31" strokeOpacity="0.22" />
                </svg>
              </button>
              <button type="button" aria-label="Bluetooth" className="size-[62px] rounded-[17px] bg-white/10">
                <svg viewBox="0 0 62 62" className="size-full" fill="none" stroke="#05e06b" strokeWidth="3.500" strokeLinecap="round" strokeLinejoin="round">
                  <path d="M18 20l26 21-13 10V11l13 10-26 21" />
                </svg>
              </button>
            </div>
          </div>

          <section className="relative">
            <CityMap />
            <button
              type="button"
              aria-label="Map style"
              className="absolute top-[91px] right-10 size-[93px] rounded-[30px] bg-[#1f2020]"
            >
              <svg viewBox="0 0 93 93" className="size-full" fill="none" stroke="white" strokeWidth="2.500" strokeLinejoin="round">
                <path d="M40.500 31.500L30.500 35a2 2 0 0 0-1.300 1.900V60a1.500 1.500 0 0 0 2 1.400l9.300-3.400 12 4.200 10.500-3.600a2 2 0 0 0 1.400-1.900V33a1.500 1.500 0 0 0-2-1.400l-9.900 3.600zM40.500 31.500V58M52.500 35.200v27" />
              </svg>
            </button>
            <div className="absolute inset-x-0 bottom-[102px] flex justify-center">
              <span className="h-2.5 w-[83px] rounded-full bg-[#adafc1]" />
            </div>
          </section>

          <section className="relative -mt-20 rounded-t-[80px] bg-white pt-[38px] pr-[37px] pb-[112px] pl-[39px]">
            <div className="mr-[3px] rounded-[40px] bg-[#f7f7f7] pt-[23px] pr-8 pb-[17px] pl-[44px]">
              <div className="flex gap-[22px]">
                <svg viewBox="0 0 31 37" className="mt-3.5 h-[37px] w-[31px] shrink-0" fill="none" stroke="#181f2c" strokeWidth="2.500" strokeLinejoin="round" aria-hidden="true">
                  <path d="M15.500 1.500a14 14 0 0 1 14 14c0 6.500-4.500 12-12.500 19a2.200 2.200 0 0 1-3 0C6 27.500 1.500 22 1.500 15.500a14 14 0 0 1 14-14z" />
                  <circle cx="15.500" cy="15" r="5" fill="#181f2c" stroke="none" />
                </svg>
                <p className="text-[36px] leading-[58px] text-[#181f2c]">
                  Unter den Linden 54, 16820117 Berlin, BE,
                  <br />
                  GermanyUnter den <span className="ml-1 text-[31px] text-[#969898]">1.03km</span>
                </p>
              </div>
              <div className="mt-3 flex h-[60px] items-center gap-[26px] text-[#969898]">
                <svg viewBox="0 0 32 32" className="size-8 shrink-0" fill="none" stroke="currentColor" strokeWidth="2.500" aria-hidden="true">
                  <circle cx="16" cy="16" r="14.500" />
                  <path d="M18 11v8H9" />
                </svg>
                <time className="text-[31px] leading-10">2025–09–25 13:28:49</time>
              </div>
            </div>

            <div className="mt-[63px] grid grid-cols-4 gap-9">
              {actions.map((action) => (
                <button
                  key={action.label}
                  type="button"
                  className="flex flex-col items-center rounded-[32px] bg-[#f7f7f7] pt-[23px] pb-[21px] text-[#181f2c]"
                >
                  <span className="size-[104px] rounded-full bg-[radial-gradient(circle_at_50%_96%,#1f5c51_0%,#1f2020_38%)]">
                    <svg viewBox="0 0 104 104" className="size-full" fill="none" stroke="white" strokeWidth="2.500" strokeLinecap="round" strokeLinejoin="round" aria-hidden="true">
                      {action.icon}
                    </svg>
                  </span>
                  <span className="mt-[17px] text-[26px] leading-8 font-medium">{action.label}</span>
                </button>
              ))}
            </div>

            <nav className="mt-[60px] grid grid-cols-4 px-1">
              {tabs.map((tab) => (
                <a
                  key={tab.label}
                  href="#"
                  aria-current={tab.active ? "page" : undefined}
                  className={
                    tab.active
                      ? "flex flex-col items-center text-[#181f2c]"
                      : "flex flex-col items-center text-[#adb0c3]"
                  }
                >
                  <span className="flex h-[62px] items-center">{tab.icon}</span>
                  <span className={tab.active ? "mt-[7px] text-[26px] leading-8 font-medium" : "mt-[7px] text-[26px] leading-8"}>
                    {tab.label}
                  </span>
                </a>
              ))}
            </nav>
          </section>
        </div>
        <div className="pointer-events-none absolute inset-0 rounded-[98px] border-16 border-[rgba(73,81,98,0.52)]" />
      </div>
    </main>
  );
}
